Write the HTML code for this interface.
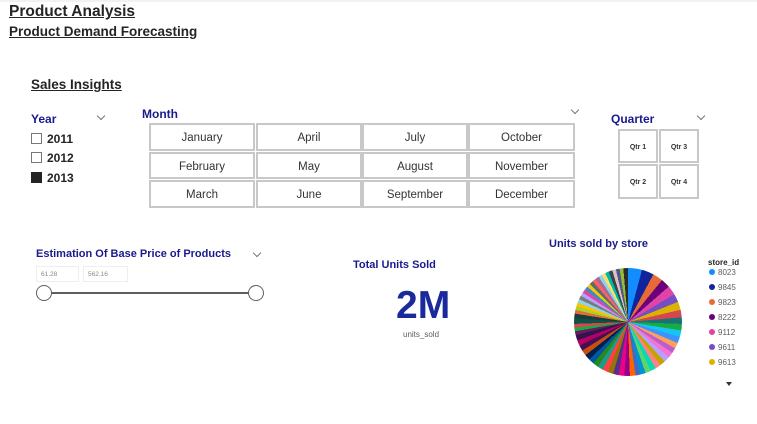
<!DOCTYPE html>
<html><head><meta charset="utf-8"><style>
*{margin:0;padding:0;box-sizing:border-box}
body{width:757px;height:424px;background:#fff;font-family:"Liberation Sans","DejaVu Sans",sans-serif;position:relative;overflow:hidden}
.a{position:absolute;white-space:nowrap}
.u{text-decoration:underline;font-weight:bold;color:#252423}
.t{color:#1a1a8c;font-weight:bold}
.btn{position:absolute;border:2px solid #c8c8c8;background:#fff;font-size:11.5px;color:#333;display:flex;align-items:center;justify-content:center;padding-top:2px}
.q{font-size:7px;font-weight:bold}
.cb{position:absolute;width:11px;height:11px;border:1px solid #777}
.chev{position:absolute;width:6px;height:6px;border-right:1px solid #777;border-bottom:1px solid #777;transform:rotate(45deg)}
.lg{position:absolute;left:709px;font-size:8px;color:#605e5c}
.lg i{display:inline-block;width:6px;height:6px;border-radius:50%;margin-right:3px;vertical-align:-0px}
</style></head><body>
<div class="a" style="left:0;top:0;width:757px;height:2px;background:#f3f2f1"></div>
<div class="a u" style="left:9px;top:3px;font-size:15.5px">Product Analysis</div>
<div class="a u" style="left:9px;top:24px;font-size:13.5px">Product Demand Forecasting</div>
<div class="a u" style="left:31px;top:77px;font-size:13.5px">Sales Insights</div>

<div class="a t" style="left:31px;top:112px;font-size:12px">Year</div>
<div class="chev" style="left:98px;top:113px"></div>
<div class="cb" style="left:31px;top:133px"></div><div class="a" style="left:47px;top:132px;font-size:12px;font-weight:bold;color:#252423">2011</div>
<div class="cb" style="left:31px;top:152px"></div><div class="a" style="left:47px;top:151px;font-size:12px;font-weight:bold;color:#252423">2012</div>
<div class="cb" style="left:31px;top:172px;background:#252423;border-color:#252423"></div><div class="a" style="left:47px;top:171px;font-size:12px;font-weight:bold;color:#252423">2013</div>

<div class="a t" style="left:142px;top:107px;font-size:12px">Month</div>
<div class="chev" style="left:572px;top:107px"></div>
<div class="btn" style="left:149px;top:123px;width:106px;height:28px">January</div>
<div class="btn" style="left:256px;top:123px;width:106px;height:28px">April</div>
<div class="btn" style="left:362px;top:123px;width:106px;height:28px">July</div>
<div class="btn" style="left:468px;top:123px;width:107px;height:28px">October</div>
<div class="btn" style="left:149px;top:152px;width:106px;height:27px">February</div>
<div class="btn" style="left:256px;top:152px;width:106px;height:27px">May</div>
<div class="btn" style="left:362px;top:152px;width:106px;height:27px">August</div>
<div class="btn" style="left:468px;top:152px;width:107px;height:27px">November</div>
<div class="btn" style="left:149px;top:180px;width:106px;height:28px">March</div>
<div class="btn" style="left:256px;top:180px;width:106px;height:28px">June</div>
<div class="btn" style="left:362px;top:180px;width:106px;height:28px">September</div>
<div class="btn" style="left:468px;top:180px;width:107px;height:28px">December</div>

<div class="a t" style="left:611px;top:112px;font-size:12px">Quarter</div>
<div class="chev" style="left:698px;top:113px"></div>
<div class="btn q" style="left:618px;top:129px;width:40px;height:34px">Qtr 1</div>
<div class="btn q" style="left:659px;top:129px;width:40px;height:34px">Qtr 3</div>
<div class="btn q" style="left:618px;top:164px;width:40px;height:35px">Qtr 2</div>
<div class="btn q" style="left:659px;top:164px;width:40px;height:35px">Qtr 4</div>

<div class="a t" style="left:36px;top:248px;font-size:11px">Estimation Of Base Price of Products</div>
<div class="chev" style="left:254px;top:250px"></div>
<div class="a" style="left:36px;top:266px;width:43px;height:16px;border:1px solid #eee;font-size:6.5px;color:#888;padding:4px 0 0 4px">61.28</div>
<div class="a" style="left:83px;top:266px;width:45px;height:16px;border:1px solid #eee;font-size:6.5px;color:#888;padding:4px 0 0 4px">562.16</div>
<div class="a" style="left:44px;top:292px;width:212px;height:2px;background:#605e5c"></div>
<div class="a" style="left:36px;top:285px;width:16px;height:16px;border:1.5px solid #605e5c;border-radius:50%;background:#fff"></div>
<div class="a" style="left:248px;top:285px;width:16px;height:16px;border:1.5px solid #605e5c;border-radius:50%;background:#fff"></div>

<div class="a t" style="left:353px;top:259px;font-size:11px">Total Units Sold</div>
<div class="a" style="left:396px;top:284px;font-size:39px;font-weight:bold;color:#1a2a9c">2M</div>
<div class="a" style="left:403px;top:330px;font-size:8px;color:#605e5c">units_sold</div>

<div class="a t" style="left:549px;top:238px;font-size:11px">Units sold by store</div>
<div class="a" style="left:574px;top:268px;width:108px;height:108px;border-radius:50%;background:conic-gradient(#118dff 0 15deg,#12239e 15deg 28deg,#e66c37 28deg 39deg,#6b007b 39deg 49deg,#e044a7 49deg 59deg,#744ec2 59deg 68deg,#d9b300 68deg 77deg,#d64550 77deg 85deg,#197278 85deg 92deg,#1aab40 92deg 99deg,#15c6f4 99deg 106deg,#4092ff 106deg 113deg,#ffa058 113deg 119deg,#be5dc9 119deg 125deg,#f472d0 125deg 131deg,#b5a1ff 131deg 137deg,#c4a200 137deg 143deg,#ff8080 143deg 149deg,#00dbbc 149deg 155deg,#5bd667 155deg 161deg,#0091d5 161deg 167deg,#4668c5 167deg 172deg,#ff6300 172deg 178deg,#99008a 178deg 184deg,#ec008c 184deg 190deg,#533285 190deg 196deg,#99700a 196deg 202deg,#ff4141 202deg 208deg,#1f9a85 208deg 214deg,#25891c 214deg 220deg,#0057a2 220deg 226deg,#002050 226deg 232deg,#c94f0f 232deg 238deg,#450f54 238deg 244deg,#b60064 244deg 250deg,#34124f 250deg 256deg,#6a1a5e 256deg 260deg,#1aab40 260deg 264deg,#d64550 264deg 268deg,#0b5345 268deg 274deg,#1a3c3c 274deg 279deg,#e66c37 279deg 283deg,#a2d729 283deg 287deg,#ffc000 287deg 291deg,#8ad4eb 291deg 295deg,#7a7a7a 295deg 299deg,#b5a1ff 299deg 303deg,#e044a7 303deg 307deg,#3c8dbc 307deg 311deg,#f2c80f 311deg 315deg,#5f6b6d 315deg 319deg,#fd625e 319deg 323deg,#a66999 323deg 327deg,#8ad4eb 327deg 331deg,#ffe066 331deg 335deg,#01b8aa 335deg 339deg,#374649 339deg 343deg,#dfbfbf 343deg 347deg,#4a588a 347deg 351deg,#99bb33 351deg 355deg,#2b2b2b 355deg 360deg)"></div>

<div class="a" style="left:708px;top:258px;font-size:8px;font-weight:bold;color:#252423">store_id</div>
<div class="lg" style="top:268px"><i style="background:#118dff"></i>8023</div>
<div class="lg" style="top:283px"><i style="background:#12239e"></i>9845</div>
<div class="lg" style="top:298px"><i style="background:#e66c37"></i>9823</div>
<div class="lg" style="top:313px"><i style="background:#6b007b"></i>8222</div>
<div class="lg" style="top:328px"><i style="background:#e044a7"></i>9112</div>
<div class="lg" style="top:343px"><i style="background:#744ec2"></i>9611</div>
<div class="lg" style="top:358px"><i style="background:#d9b300"></i>9613</div>
<div class="a" style="left:726px;top:382px;width:0;height:0;border-left:3px solid transparent;border-right:3px solid transparent;border-top:4px solid #333"></div>
</body></html>
